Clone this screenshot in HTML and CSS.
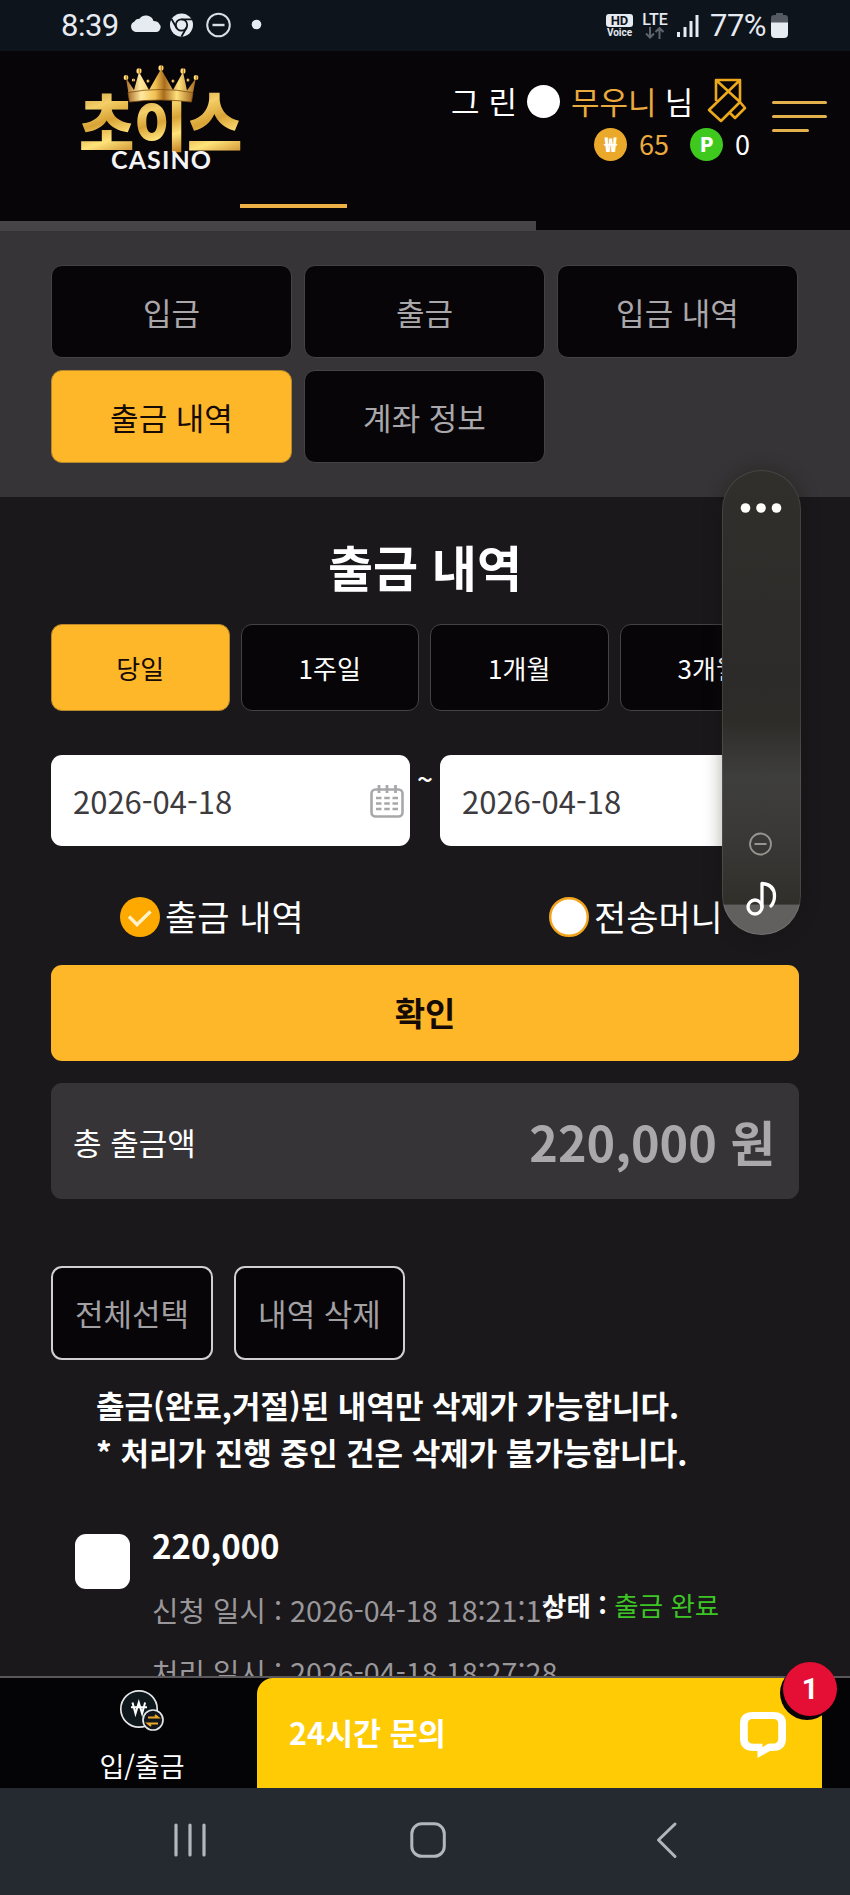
FILE: index.html
```html
<!DOCTYPE html>
<html lang="ko">
<head>
<meta charset="utf-8">
<title>출금 내역</title>
<link rel="stylesheet" href="styles.css">
</head>
<body>
<div class="screen">
  <div class="status">
    <span class="clock">8:39</span>
    <svg class="status-left" width="134" height="30" viewBox="0 0 134 30">
      <path d="M5.500 22a5.500 5.500 0 0 1-1-10.500q1-2.500 5-2.800A8 8 0 0 1 23.500 11q4.500 0 5.500 2.500a5 5 0 0 1-2 8.500z" fill="#e6eaf1"/>
      <circle cx="51.500" cy="15" r="11.500" fill="#e6eaf1"/>
      <circle cx="51.500" cy="15" r="5.700" fill="none" stroke="#0e141c" stroke-width="1.800"/>
      <path d="M51.500 9.300H62M46.500 17.800 41.500 9M56.500 17.800 51.500 26.500" stroke="#0e141c" stroke-width="1.800"/>
      <circle cx="88.500" cy="15" r="11.300" fill="none" stroke="#d9dee6" stroke-width="2"/>
      <path d="M82.500 15h12" stroke="#d9dee6" stroke-width="2.400"/>
      <circle cx="126.500" cy="14.500" r="4.800" fill="#e6eaf1"/>
    </svg>
    <div class="hd"><b>HD</b><span>Voice</span></div>
    <div class="lte"><span>LTE</span>
      <svg width="20" height="12" viewBox="0 0 20 12" fill="none" stroke="#5f656d" stroke-width="2"><path d="M5 0v10.500M1 6.500l4 4 4-4M14.500 12V1M10.500 5l4-4 4 4"/></svg>
    </div>
    <svg class="signal" width="24" height="24" viewBox="0 0 24 24" stroke="#e6eaf1" stroke-width="3"><path d="M2.500 18v5M9 13v10M15 7v16M21 1v22"/></svg>
    <span class="percent">77%</span>
    <svg class="battery" width="18" height="26" viewBox="0 0 18 26"><path d="M5 0h7v2h2q3 0 3 3v5H0V5q0-3 3-3h2z" fill="#555a62"/><path d="M0 9.500h17V21q0 4-4 4H4q-4 0-4-4z" fill="#e6eaf1"/></svg>
  </div>

  <header class="header">
    <svg class="logo" width="170" height="112" viewBox="0 0 170 112">
      <defs>
        <linearGradient id="gold" x1="0" y1="0" x2=".2" y2="1"><stop offset="0" stop-color="#a87022"/><stop offset=".4" stop-color="#f5cf68"/><stop offset=".58" stop-color="#d9a336"/><stop offset=".78" stop-color="#ffe37a"/><stop offset="1" stop-color="#c8882a"/></linearGradient>
        <linearGradient id="crown" x1="0" x2="1"><stop offset="0" stop-color="#a96d26"/><stop offset=".2" stop-color="#ffe9a0"/><stop offset=".42" stop-color="#f1c150"/><stop offset=".55" stop-color="#a96c1d"/><stop offset=".75" stop-color="#ffe17c"/><stop offset="1" stop-color="#a3671c"/></linearGradient>
      </defs>
      <g class="logo-ko">
        <text transform="translate(4 85) scale(.97 1.080)">초</text>
        <text transform="translate(59 80.500) scale(.93 .880)">이</text>
        <text transform="translate(112 86) scale(.97 1.180)">스</text>
      </g>
      <g fill="url(#crown)">
        <path d="M51 13 54.500 35q31-5 62 0L121 13l-9 12.500L108 7l-10 18L86 4 74 25 64 7l-5 18z"/>
        <path d="M53 27.500q32-6 65 0l-1.500 9.500q-31-4-62 0z" stroke="#7d4c14" stroke-width=".8"/>
        <circle cx="51" cy="12.500" r="2.500"/><circle cx="64" cy="6" r="2.800"/><circle cx="86" cy="3" r="2.800"/><circle cx="108" cy="6" r="2.800"/><circle cx="121" cy="12.500" r="2.500"/>
        <circle cx="58.500" cy="15" r="1.600"/><circle cx="73" cy="16" r="1.600"/><circle cx="98" cy="16" r="1.600"/><circle cx="113" cy="15" r="1.600"/>
      </g>
      <text class="logo-en" x="36" y="104" textLength="100">CASINO</text>
    </svg>
    <div class="account">
      <div class="user">
        <span>그</span><span class="rin">린</span><i class="dot"></i><span class="gold">무우니</span><span class="nim">님</span>
        <svg width="40" height="46" viewBox="0 0 40 46" fill="none" stroke="#eda91c" stroke-width="2.600" stroke-linejoin="round"><path d="M9 23V2h24v22M9 2l24 22M33 2 2 32l12 11 19-19M33 24l5 6-10 10-6-6"/></svg>
      </div>
      <div class="balance">
        <i class="coin">₩</i><span class="money">65</span><i class="coin point">P</i><span class="points">0</span>
      </div>
    </div>
    <div class="burger"><i></i><i></i><i></i></div>
    <div class="tab-line"></div>
    <div class="scroll-strip"></div>
  </header>

  <main class="main">
    <nav class="menu">
      <a>입금</a><a>출금</a><a>입금 내역</a><a class="active">출금 내역</a><a>계좌 정보</a>
    </nav>
    <section class="content">
      <h1>출금 내역</h1>
      <div class="periods"><a class="active">당일</a><a>1주일</a><a>1개월</a><a>3개월</a></div>
      <div class="dates">
        <div class="date"><span>2026-04-18</span>
          <svg width="34" height="34" viewBox="0 0 34 34" fill="none" stroke="#a8a8aa"><rect x="1.500" y="5.500" width="31" height="27" rx="4" stroke-width="2.600"/><path d="M9 1v8M17 1v8M25.500 1v8" stroke-width="2.800"/><path d="M6 14h22M6 19.500h22M6 25h22" stroke-width="2.600" stroke-dasharray="5.500 2.750"/></svg>
        </div>
        <span class="tilde">~</span>
        <div class="date"><span>2026-04-18</span></div>
      </div>
      <div class="radios">
        <div class="radio"><svg width="40" height="40" viewBox="0 0 40 40"><circle cx="20" cy="20" r="20" fill="#fda900"/><path d="M9 19.500l8 8L30.500 14.500" fill="none" stroke="#fff2c8" stroke-width="3.400"/></svg><span>출금 내역</span></div>
        <div class="radio"><svg width="40" height="40" viewBox="0 0 40 40"><circle cx="20" cy="20" r="18.800" fill="#fff" stroke="#f2a51c" stroke-width="2.400"/></svg><span>전송머니</span></div>
      </div>
      <div class="confirm">확인</div>
      <div class="total"><span>총 출금액</span><strong>220,000 원</strong></div>
      <div class="actions"><a>전체선택</a><a>내역 삭제</a></div>
      <p class="notice">출금(완료,거절)된 내역만 삭제가 가능합니다.<br>* 처리가 진행 중인 건은 삭제가 불가능합니다.</p>
      <div class="record">
        <i class="check"></i>
        <div class="info">
          <strong>220,000</strong>
          <span>신청 일시 : 2026-04-18 18:21:17</span>
          <span>처리 일시 : 2026-04-18 18:27:28</span>
        </div>
        <div class="state"><b>상태 :</b> <span>출금 완료</span></div>
      </div>
    </section>
  </main>

  <footer class="footer">
    <div class="cash">
      <svg width="46" height="44" viewBox="0 0 46 44" fill="none"><circle cx="20" cy="20" r="18.200" fill="#0d171c" stroke="#e3e5e7" stroke-width="1.700"/><path d="M13.500 13.500l3 11 3.300-11 3.300 11 3-11M12 18.200h16" stroke="#fff" stroke-width="2"/><circle cx="34" cy="31" r="10" fill="#10161b" stroke="#e3e5e7" stroke-width="1.700"/><path d="M29 28.500h10l-3-2.500M39 34.500H29l3 2.500" stroke="#eba72a" stroke-width="2"/></svg>
      <span>입/출금</span>
    </div>
    <div class="chat"><b>24시간 문의</b>
      <svg width="46" height="46" viewBox="3.750 3.750 41.500 45.250" preserveAspectRatio="none" fill="none" stroke="#fff" stroke-width="7"><path d="M21 38.500h-5q-8.750 0-8.750-8.750V15.250q0-8 8-8h18.500q8 0 8 8v14.500q0 8.750-8.750 8.750h-3"/><path d="M19.500 35v14l12-7.500 3-6.500h-5.500l-5 3.500v-3.500z" fill="#fff" stroke="none"/></svg>
      <i class="badge">1</i>
    </div>
  </footer>

  <div class="system">
    <svg width="34" height="36" viewBox="0 0 34 36" stroke="#b2b7bc" stroke-width="3.200" stroke-linecap="round"><path d="M3 3v30M17 3v30M31 3v30"/></svg>
    <svg width="36" height="36" viewBox="0 0 36 36" fill="none" stroke="#b2b7bc" stroke-width="3"><rect x="1.800" y="1.800" width="32.500" height="32.500" rx="10"/></svg>
    <svg width="22" height="38" viewBox="0 0 22 38" fill="none" stroke="#b2b7bc" stroke-width="3" stroke-linecap="round" stroke-linejoin="round"><path d="M19 3 2.500 19 19 35.500"/></svg>
  </div>

  <aside class="volume">
    <svg width="79" height="465" viewBox="0 0 79 465" fill="none">
      <g fill="#fffefa"><circle cx="23.500" cy="38" r="4.800"/><circle cx="39" cy="38" r="4.800"/><circle cx="54.500" cy="38" r="4.800"/></g>
      <g stroke="#96958f" stroke-width="1.800"><circle cx="38.500" cy="374" r="10.500"/><path d="M32.500 374h12"/></g>
      <g stroke="#fff" stroke-width="3.300"><circle cx="33" cy="437" r="7"/><path d="M40 437V413.500q12.500 1 12.500 12.500 0 6-3.500 10" stroke-linejoin="round" stroke-linecap="round"/></g>
    </svg>
  </aside>
</div>
</body>
</html>
```
FILE: styles.css
```css
* { box-sizing: border-box; }
body { margin: 0; background: #1a181b; }
.screen {
  position: relative;
  display: flex;
  flex-direction: column;
  width: 850px;
  height: 1895px;
  overflow: hidden;
  background: #1a181b;
  color: #fff;
  font-family: "Noto Sans CJK KR", sans-serif;
}
i { font-style: normal; }

/* Status bar */
.status { display: flex; align-items: center; flex: none; height: 51px; padding-left: 61px; background: #0e141c; color: #e6eaf1; font-family: Roboto, sans-serif; }
.clock { width: 69px; font-size: 31px; letter-spacing: -.5px; }
.status-left { flex: none; margin-top: -1px; }
.hd { width: 27px; margin-left: 342px; font-size: 10px; line-height: 1; text-align: center; }
.hd b { display: block; height: 13px; border-radius: 3px; background: #e6eaf1; color: #0e141c; font-size: 13px; line-height: 13px; }
.hd span { display: block; margin-top: 1px; font-weight: 700; }
.lte { display: flex; flex-direction: column; align-items: center; width: 28px; margin-left: 8px; font-size: 16px; font-weight: 500; line-height: 15px; }
.signal { margin-left: 7px; }
.percent { width: 58px; margin-left: 10px; font-size: 31px; letter-spacing: -.5px; white-space: nowrap; }
.battery { margin-left: 3px; }

/* Site header */
.header { position: relative; display: flex; flex: none; height: 179px; background: #070508; }
.logo { margin: 14px 0 0 75px; flex: none; overflow: visible; }
.logo-ko { font: 900 62px "Noto Sans CJK KR", sans-serif; fill: url(#gold); }
.logo-en { font: 700 25px Lato, sans-serif; fill: #f4f4f6; }
.account { width: 304px; margin: 25px 0 0 206px; }
.user { display: flex; align-items: center; height: 50px; font-size: 31px; line-height: 50px; white-space: nowrap; }
.user .rin { margin-left: 9px; }
.dot { width: 33px; height: 33px; margin: 0 11px 0 10px; border-radius: 50%; background: #fff; }
.gold, .money { color: #eaaa3e; }
.user .nim { margin-left: 8px; }
.user svg { margin-left: 14px; }
.balance { display: flex; align-items: center; height: 34px; padding-left: 143px; font-size: 27px; line-height: 34px; }
.balance span { padding-top: 2px; }
.coin { width: 33px; height: 33px; margin-top: 2px; border-radius: 50%; background: #eaa92b; font-size: 20px; font-weight: 900; line-height: 31px; text-align: center; }
.point { background: #3fc91e; font-size: 20px; }
.money { width: 51px; margin-left: 12px; }
.points { margin-left: 12px; }
.burger { display: flex; flex-direction: column; gap: 11px; width: 55px; margin: 50px 0 0 17px; }
.burger i { height: 3px; border-radius: 2px; background: #e2b14b; }
.burger i:last-child { width: 37px; }
.tab-line { position: absolute; left: 240px; bottom: 22px; width: 107px; height: 4px; background: #edb047; }
.scroll-strip { position: absolute; left: 0; bottom: -1px; width: 536px; height: 10px; background: #464447; }

/* Page */
.main { flex: 1; min-height: 0; overflow: hidden; }
.menu { display: grid; grid-template-columns: repeat(3, 1fr); gap: 12px; height: 267px; padding: 35px 52px 35px 51px; align-content: start; background: #363436; }
.menu a { height: 93px; border: 1px solid #444245; border-radius: 11px; background: #070508; color: #a9a7aa; font-size: 31px; line-height: 91px; text-align: center; }
.menu a.active, .periods a.active { border-color: #b8872a; background: #fdb728; color: #150a05; }
.content { display: flex; flex-direction: column; padding: 0 51px; }
h1 { height: 72px; margin: 33px 0 0; font-size: 49px; line-height: 72px; text-align: center; }
.periods { display: flex; gap: 11px; margin: 22px 1px 0 0; }
.periods a { flex: 1; height: 87px; border: 1px solid #444245; border-radius: 11px; background: #070508; font-size: 26px; line-height: 85px; text-align: center; }
.dates { display: flex; height: 91px; margin-top: 44px; }
.date { display: flex; align-items: center; justify-content: space-between; width: 359px; padding: 0 6px 0 22px; border-radius: 11px; background: #fff; color: #3d3b3e; font-size: 31px; }
.tilde { width: 30px; font-size: 28px; font-weight: 500; line-height: 46px; text-align: center; }
.radios { display: flex; height: 50px; margin: 46px 0 0 69px; }
.radio { display: flex; align-items: center; gap: 5px; width: 429px; font-size: 35px; line-height: 48px; white-space: nowrap; flex: none; }
.radio span { margin-top: -2px; }
.confirm { height: 96px; margin-top: 23px; border-radius: 11px; background: #fdb728; color: #150a05; font-size: 33px; font-weight: 700; line-height: 94px; text-align: center; }
.total { display: flex; align-items: center; justify-content: space-between; height: 116px; margin-top: 22px; padding: 0 24px 0 22px; border-radius: 11px; background: #363436; font-size: 31px; }
.total strong { color: #aaa8ab; font-size: 48.500px; line-height: 1; }
.actions { display: flex; gap: 21px; margin-top: 67px; }
.actions a { height: 94px; width: 162px; border: 2px solid #d0d0d0; border-radius: 11px; background: #070508; color: #a2a0a3; font-size: 31px; line-height: 90px; text-align: center; }
.actions a:last-child { width: 171px; }
.notice { margin: 21px 0 0 45px; font-size: 31px; font-weight: 700; line-height: 47px; white-space: nowrap; }
.record { position: relative; display: flex; margin-top: 59px; padding-left: 24px; }
.check { width: 55px; height: 55px; border-radius: 11px; background: #fff; }
.info { display: flex; flex-direction: column; margin: -16px 0 0 22px; color: #99979a; font-size: 28.750px; line-height: 62px; white-space: nowrap; }
.info strong { height: 61px; color: #fff; font-size: 33px; line-height: 55px; }
.state { position: absolute; left: 491px; top: 49px; font-size: 26.500px; line-height: 44px; white-space: nowrap; }
.state span { color: #3dc425; }

/* Bottom bar */
.footer { display: flex; flex: none; height: 112px; border-top: 2px solid #59575a; background: #040305; }
.cash { display: flex; flex-direction: column; align-items: center; width: 257px; padding: 11px 0 0 27px; font-size: 27px; line-height: 38px; }
.cash span { margin-top: 14px; }
.chat { position: relative; display: flex; align-items: center; justify-content: space-between; width: 565px; padding: 0 36px 0 32px; border-radius: 16px 0 0 0; background: #fecb05; font-size: 30.500px; }
.chat b { margin-top: -3px; }
.chat svg { margin-top: 3px; }
.badge { position: absolute; right: -15px; top: -16px; width: 54px; height: 54px; border-radius: 50%; background: #e50e35; box-shadow: -3px 4px 0 #080305; font: 700 29px/54px Roboto, sans-serif; text-align: center; }

/* System navigation */
.system { display: flex; align-items: center; flex: none; height: 107px; padding: 0 0 4px 173px; background: #252a31; }
.system svg:nth-child(2) { margin-left: 203px; }
.system svg:nth-child(3) { margin-left: 210px; }

/* Volume slider over the page */
.volume { position: absolute; left: 722px; top: 470px; width: 79px; height: 465px; border-radius: 40px; background: linear-gradient(#302f2c 0, #2d2b29 45%, #2e2c29 54%, #3e3e3d 66%, #3a3938 78%, #302f2a 93.400%, #61605f 93.500%); box-shadow: 0 0 18px rgba(20,16,8,.35), inset 0 0 0 1px rgba(255,255,255,.1); overflow: hidden; }
```
